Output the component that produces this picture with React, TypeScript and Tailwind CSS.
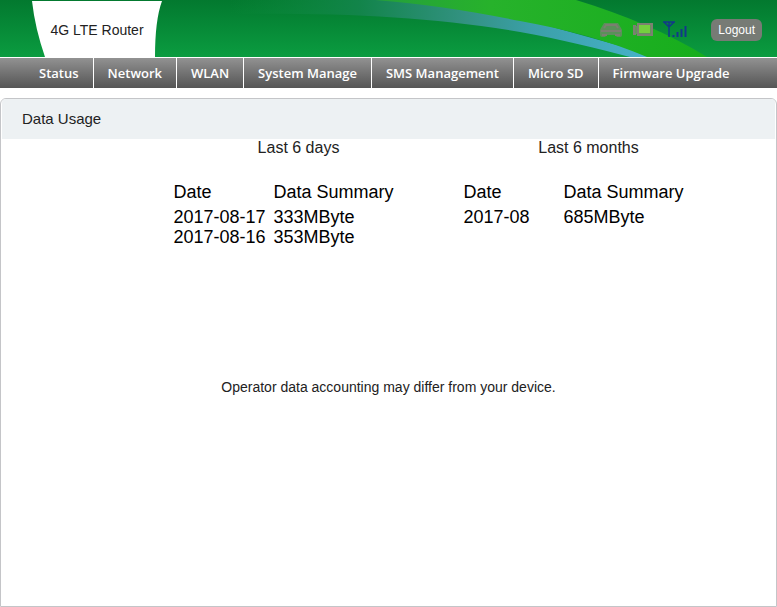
const MENU = ['Status', 'Network', 'WLAN', 'System Manage', 'SMS Management', 'Micro SD', 'Firmware Upgrade']

const DAYS = [
  { date: '2017-08-17', total: '333MByte' },
  { date: '2017-08-16', total: '353MByte' },
]

const MONTHS = [{ date: '2017-08', total: '685MByte' }]

function Swoosh() {
  return (
    <svg className="absolute inset-0 h-full w-full" viewBox="0 0 777 57" preserveAspectRatio="none" aria-hidden="true">
      <defs>
        <linearGradient id="blue" x1="0" x2="1" y1="0" y2="0">
          <stop offset="0" stopColor="#0b8a3a" stopOpacity="0" />
          <stop offset="0.3" stopColor="#12844a" />
          <stop offset="0.55" stopColor="#339282" />
          <stop offset="0.7" stopColor="#3b9fa8" />
          <stop offset="1" stopColor="#48b4cc" />
        </linearGradient>
        <linearGradient id="lime" x1="0" x2="1" y1="0" y2="0">
          <stop offset="0" stopColor="#259f3c" />
          <stop offset="0.35" stopColor="#27b22b" />
          <stop offset="1" stopColor="#17ae1c" />
        </linearGradient>
      </defs>
      <path d="M230 0H400L520 18L660 57H630C600 49 560 39 520 32C430 17 350 13 230 14Z" fill="url(#blue)" />
      <path d="M375 0H576C625 15 670 34 707 57H647C610 41 565 29 520 21C470 11 425 4 375 0Z" fill="url(#lime)" />
    </svg>
  )
}

function StatusIcons() {
  return (
    <div className="flex items-center gap-[10px]">
      <svg className="h-5 w-6" viewBox="0 0 24 20" aria-label="Connected devices">
        <path d="M5 3h14l3 5 1 2v5q0 2-2 2h-3l-2-2h-8l-2 2H3q-2 0-2-2v-5l1-2z" fill="#5b905a" />
        <path d="M5 8l2-3h10l2 3M2 11h20M3 15h5M16 15h5" fill="none" stroke="#7b7f70" strokeWidth="2" />
      </svg>
      <svg className="h-5 w-5" viewBox="0 0 20 20" aria-label="Battery">
        <path d="M4 3h16v13H4v-2H0V6h4z" fill="#62945a" />
        <path d="M19 4H5v11h14zM3 6H1v8h2" fill="none" stroke="#7d8072" strokeWidth="2" />
        <rect x="6" y="5" width="11" height="8" fill="#74cf3f" />
      </svg>
      <svg className="h-5 w-6" viewBox="0 0 24 20" fill="none" stroke="#12388a" aria-label="Signal strength">
        <path d="M0 2h12M1 2l5 5 5-5M6 2v15" strokeWidth="1.500" />
        <path d="M10.500 17v-2M14.500 17v-5M18.500 17V9M22.500 17V6" strokeWidth="2" />
      </svg>
    </div>
  )
}

function UsageTable({ title, rows }: { title: string; rows: { date: string; total: string }[] }) {
  return (
    <section>
      <h2 className="text-center text-base leading-[18px] text-[#222]">{title}</h2>
      <table className="mt-[25px] ml-5 table-fixed text-left text-lg leading-5 text-black">
        <thead>
          <tr>
            <th className="w-[100px] pb-[5px] font-normal">Date</th>
            <th className="w-[150px] pb-[5px] font-normal">Data Summary</th>
          </tr>
        </thead>
        <tbody>
          {rows.map(r => (
            <tr key={r.date}>
              <td>{r.date}</td>
              <td>{r.total}</td>
            </tr>
          ))}
        </tbody>
      </table>
    </section>
  )
}

export default function App() {
  return (
    <div className="flex min-h-screen flex-col bg-white font-['Liberation_Sans',Arial,sans-serif]">
      <header className="relative flex h-[57px] items-center justify-between bg-linear-to-b from-[#03792f] to-[#0b9c40] pr-[15px] pl-8">
        <Swoosh />
        <div className="relative flex h-full w-[130px] items-center justify-center">
          <svg className="absolute inset-0 h-full w-full" viewBox="0 0 130 57" preserveAspectRatio="none" aria-hidden="true">
            <path d="M0 1H130Q123 20 123 57H13Q3 28 0 1Z" fill="#fff" />
          </svg>
          <h1 className="relative pt-[2px] text-sm text-[#222]">4G LTE Router</h1>
        </div>
        <div className="relative flex items-center gap-6 pt-[2px]">
          <StatusIcons />
          <button className="h-[22px] rounded-md bg-[#777b75] px-[7px] text-xs text-white">Logout</button>
        </div>
      </header>

      <nav className="flex h-[31px] border-t border-white bg-linear-to-b from-[#929292] to-[#555] pl-[25px] font-['Open_Sans','Noto_Sans',sans-serif] text-[13px] font-semibold text-white">
        {MENU.map(m => (
          <a key={m} href="#" className="flex items-center border-r border-white px-[14px] pt-px whitespace-nowrap last:border-r-0">{m}</a>
        ))}
      </nav>

      <main className="mt-[10px] flex flex-1 flex-col rounded-t-md border border-[#c4c5c8] pb-8">
        <div className="mx-px flex h-10 items-center rounded-t bg-[#edf1f3] px-5 text-[15px] text-[#222]">Data Usage</div>
        <div className="grid min-h-[228px] grid-cols-[290px_290px] content-start justify-center pl-[110px]">
          <UsageTable title="Last 6 days" rows={DAYS} />
          <UsageTable title="Last 6 months" rows={MONTHS} />
        </div>
        <p className="mt-[10px] text-center text-sm text-[#222]">Operator data accounting may differ from your device.</p>
      </main>
    </div>
  )
}
